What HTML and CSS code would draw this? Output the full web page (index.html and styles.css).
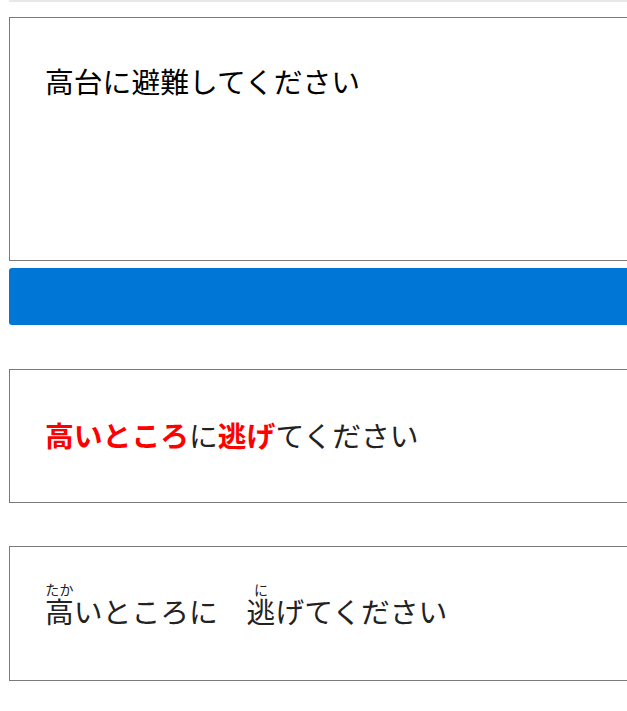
FILE: index.html
```html
<!DOCTYPE html>
<html lang="ja">
<head>
<meta charset="utf-8">
<title>避難</title>
<link rel="stylesheet" href="styles.css">
</head>
<body>
<div class="page">
  <div class="topline"></div>
  <div class="input-box">高台に避難してください</div>
  <div class="button"></div>
  <div class="out-box"><span class="em">高いところ</span>に<span class="em">逃げ</span>てください</div>
  <div class="out-box ruby-box"><ruby>高<rt>たか</rt></ruby>いところに　<ruby>逃<rt>に</rt></ruby>げてください</div>
</div>
</body>
</html>
```
FILE: styles.css
```css
html, body {
  margin: 0;
  padding: 0;
  background: #fff;
  overflow: hidden;
}
.page {
  padding-left: 9px;
  font-family: "Noto Sans CJK JP", "Noto Sans", sans-serif;
  font-size: 28.8px;
}
.topline {
  width: 720px;
  height: 2px;
  background: #e8e8e8;
}
.input-box {
  margin-top: 15px;
  width: 720px;
  height: 244px;
  box-sizing: border-box;
  border: 1px solid #7a7a7a;
  padding: 41px 35px 0;
  line-height: 1.5;
  color: #000;
}
.button {
  margin-top: 7px;
  width: 720px;
  height: 57px;
  background: #0076d7;
  border-radius: 3px;
}
.out-box {
  margin-top: 44px;
  width: 720px;
  height: 134px;
  box-sizing: border-box;
  border: 1px solid #7a7a7a;
  padding: 0 35px 3px;
  display: flex;
  align-items: center;
  color: #222;
}
.ruby-box {
  margin-top: 43px;
  height: 135px;
  display: block;
  padding-top: 42px;
  line-height: 1.5;
}
.em {
  color: #ff0000;
  font-weight: 700;
}
rt {
  font-size: 14px;
  line-height: 1;
}
```
